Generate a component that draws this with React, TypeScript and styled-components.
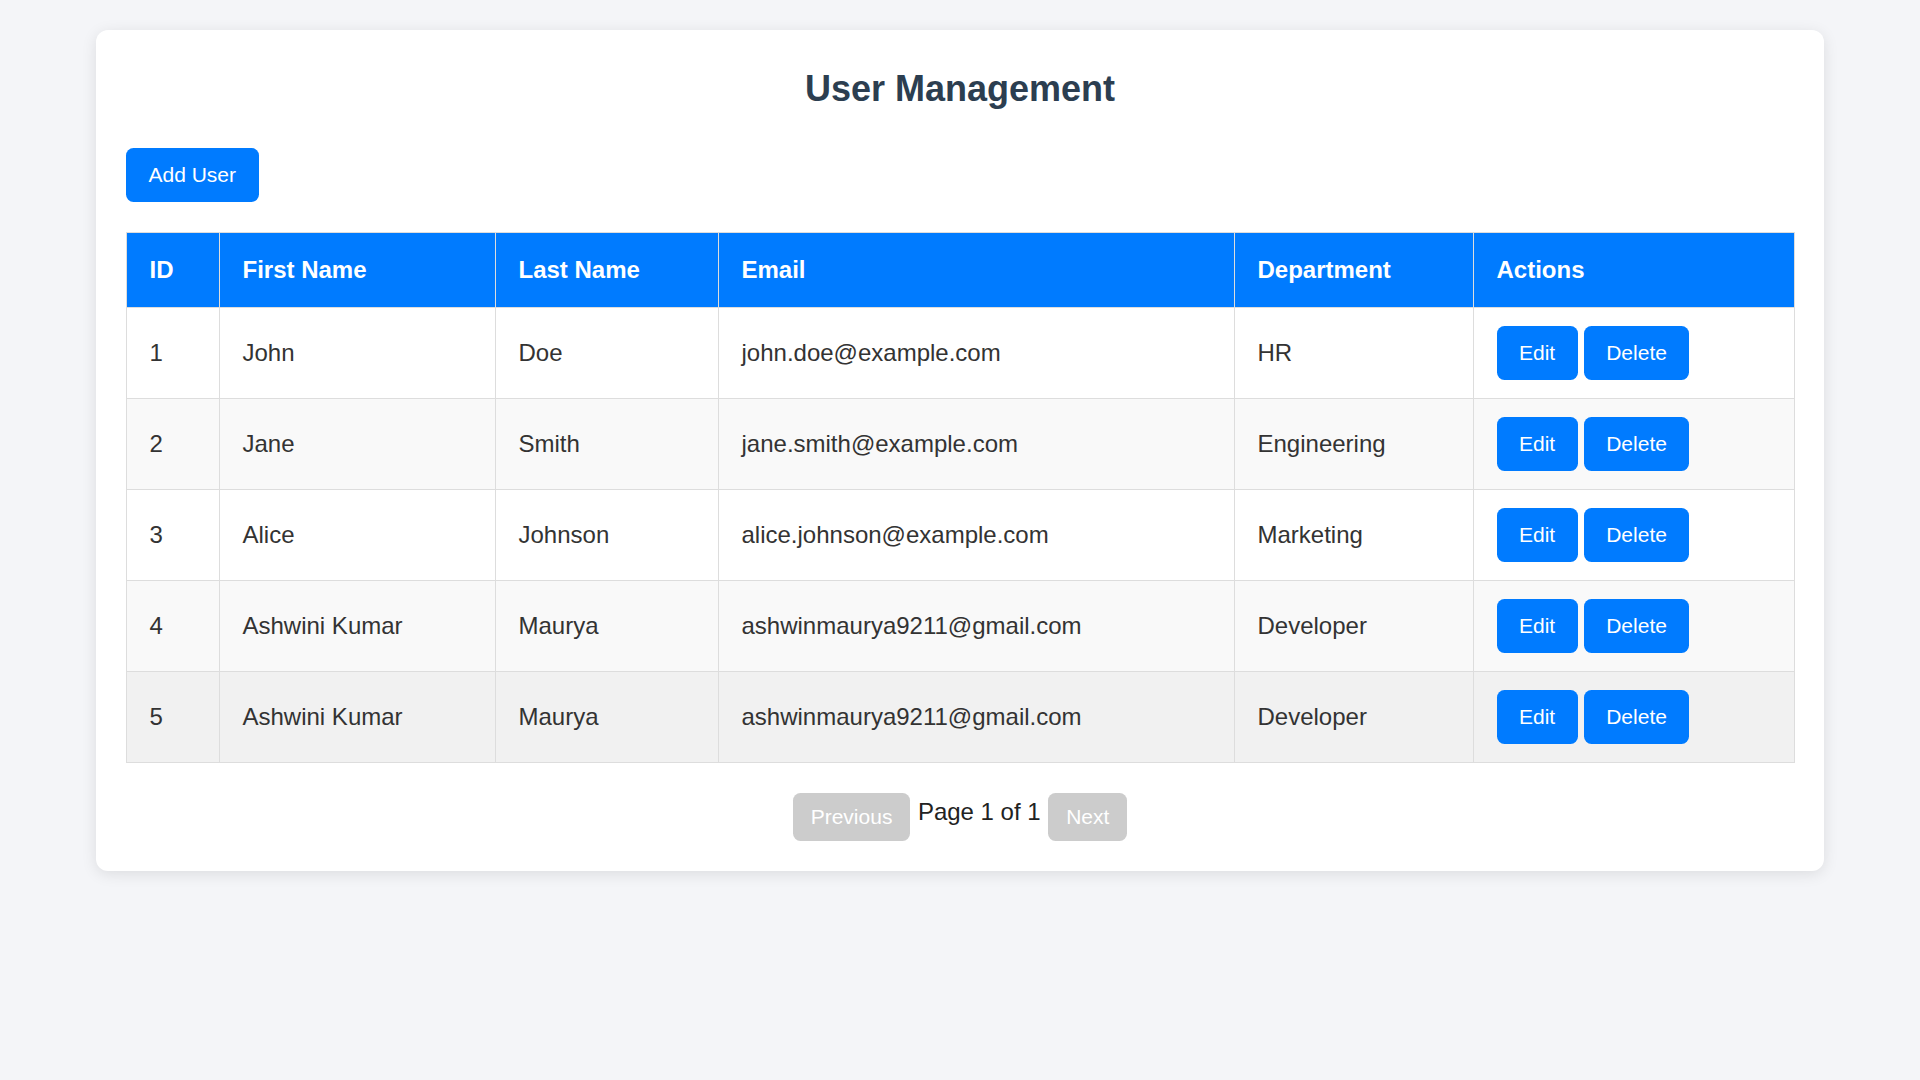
import React from "react";
import styled, { createGlobalStyle } from "styled-components";

const GlobalStyle = createGlobalStyle`
  html, body {
    margin: 0;
    padding: 0;
    background: #f4f5f8;
    font-family: "Liberation Sans", Arial, sans-serif;
    color: #333;
  }
  * { box-sizing: border-box; }
`;

const Page = styled.div`
  min-height: 1080px;
  padding-top: 30px;
`;

const Card = styled.div`
  width: 1728px;
  margin: 0 auto;
  background: #ffffff;
  border-radius: 12px;
  box-shadow: 0 3px 15px rgba(0, 0, 0, 0.1);
  padding: 30px;
`;

const Title = styled.h2`
  margin: 8px 0 38px;
  text-align: center;
  font-size: 36px;
  font-weight: 700;
  color: #2c3e50;
  line-height: normal;
`;

const PrimaryButton = styled.button`
  font-family: "Liberation Sans", Arial, sans-serif;
  font-size: 21px;
  line-height: 24px;
  padding: 15px 22.5px;
  background: #007bff;
  color: #ffffff;
  border: none;
  border-radius: 7.5px;
  cursor: pointer;
`;

const AddButton = styled(PrimaryButton)`
  display: block;
  margin-bottom: 30px;
`;

const Table = styled.table`
  width: 100%;
  border-collapse: collapse;
  table-layout: fixed;
  font-size: 24px;
`;

const HeadCell = styled.th<{ $w: number }>`
  width: ${(p) => p.$w}px;
  background: #007bff;
  color: #ffffff;
  font-weight: 700;
  text-align: left;
  padding: 23px 22.5px;
  border: 1px solid #ddd;
  line-height: normal;
`;

const Row = styled.tr<{ $bg: string }>`
  background: ${(p) => p.$bg};
`;

const Cell = styled.td`
  padding: 18px 22.5px;
  border: 1px solid #ddd;
  color: #333;
  vertical-align: middle;
  line-height: normal;
  white-space: nowrap;
`;

const ActionGroup = styled.div`
  display: flex;
  gap: 6px;
`;

const Pagination = styled.div`
  display: flex;
  justify-content: center;
  align-items: flex-start;
  margin-top: 30px;
`;

const PageButton = styled.button`
  font-family: "Liberation Sans", Arial, sans-serif;
  font-size: 21px;
  line-height: 24px;
  padding: 12px 18px;
  background: #cccccc;
  color: #ffffff;
  border: none;
  border-radius: 7.5px;
`;

const PageInfo = styled.span`
  font-size: 24px;
  line-height: normal;
  margin: 0 7.5px;
  padding-top: 5px;
  color: #222;
`;

const columns = [
  { label: "ID", w: 93 },
  { label: "First Name", w: 276 },
  { label: "Last Name", w: 223 },
  { label: "Email", w: 516 },
  { label: "Department", w: 239 },
  { label: "Actions", w: 321 },
];

const users = [
  { id: 1, first: "John", last: "Doe", email: "john.doe@example.com", dept: "HR" },
  { id: 2, first: "Jane", last: "Smith", email: "jane.smith@example.com", dept: "Engineering" },
  { id: 3, first: "Alice", last: "Johnson", email: "alice.johnson@example.com", dept: "Marketing" },
  { id: 4, first: "Ashwini Kumar", last: "Maurya", email: "ashwinmaurya9211@gmail.com", dept: "Developer" },
  { id: 5, first: "Ashwini Kumar", last: "Maurya", email: "ashwinmaurya9211@gmail.com", dept: "Developer" },
];

const rowBg = (i: number) => (i === 4 ? "#f1f1f1" : i % 2 === 1 ? "#f9f9f9" : "#ffffff");

export default function App() {
  return (
    <>
      <GlobalStyle />
      <Page>
        <Card>
          <Title>User Management</Title>
          <AddButton>Add User</AddButton>
          <Table>
            <thead>
              <tr>
                {columns.map((c) => (
                  <HeadCell key={c.label} $w={c.w}>
                    {c.label}
                  </HeadCell>
                ))}
              </tr>
            </thead>
            <tbody>
              {users.map((u, i) => (
                <Row key={u.id} $bg={rowBg(i)}>
                  <Cell>{u.id}</Cell>
                  <Cell>{u.first}</Cell>
                  <Cell>{u.last}</Cell>
                  <Cell>{u.email}</Cell>
                  <Cell>{u.dept}</Cell>
                  <Cell>
                    <ActionGroup>
                      <PrimaryButton>Edit</PrimaryButton>
                      <PrimaryButton>Delete</PrimaryButton>
                    </ActionGroup>
                  </Cell>
                </Row>
              ))}
            </tbody>
          </Table>
          <Pagination>
            <PageButton disabled>Previous</PageButton>
            <PageInfo>Page 1 of 1</PageInfo>
            <PageButton disabled>Next</PageButton>
          </Pagination>
        </Card>
      </Page>
    </>
  );
}
